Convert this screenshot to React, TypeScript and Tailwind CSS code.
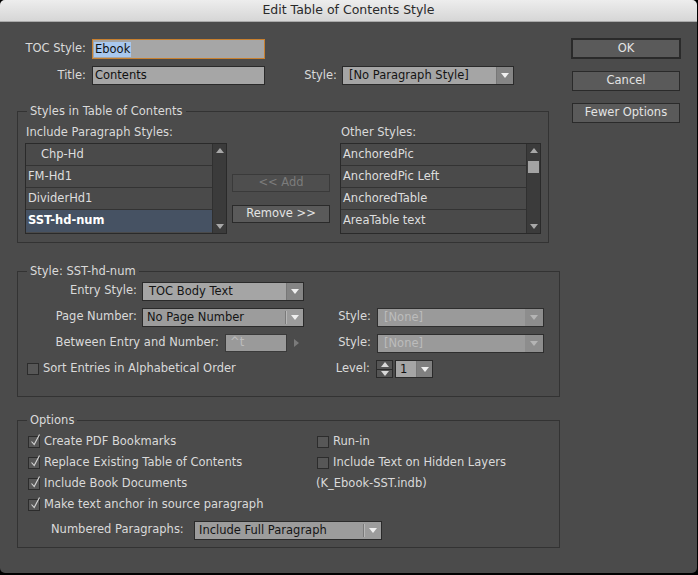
import type { ReactNode } from "react"

// ---------------------------------------------------------------------------
// Small building blocks
// ---------------------------------------------------------------------------

function Caret({ className }: { className: string }) {
  return (
    <svg width="8" height="5" viewBox="0 0 8 5" className={className}>
      <path d="M0 0h8L4 5z" fill="currentColor" />
    </svg>
  )
}

function UpCaret({ className }: { className: string }) {
  return (
    <svg width="8" height="5" viewBox="0 0 8 5" className={className}>
      <path d="M0 5h8L4 0z" fill="currentColor" />
    </svg>
  )
}

type DropVariant = "solid" | "split" | "disabled"

function Dropdown({
  value,
  width,
  variant,
}: {
  value: string
  width: string
  variant: DropVariant
}) {
  if (variant === "disabled") {
    return (
      <div className={`flex h-[19px] border border-[#2e2e2e] bg-[#9a9a9a] ${width}`}>
        <span className="flex-1 pl-[6px] leading-[17px] text-[#bcbcbc]">{value}</span>
        <span className="flex w-[18px] items-center justify-center bg-[#8d8d8d]">
          <Caret className="text-[#b4b4b4]" />
        </span>
      </div>
    )
  }
  if (variant === "split") {
    return (
      <div className={`flex h-[19px] border border-[#2a2a2a] bg-[#9c9c9c] ${width}`}>
        <span className="flex-1 pl-[4px] leading-[17px] text-[#141414]">{value}</span>
        <span className="my-[2px] w-px bg-[#7a7a7a]" />
        <span className="my-[2px] w-px bg-[#b8b8b8]" />
        <span className="flex w-[16px] items-center justify-center">
          <Caret className="text-[#efefef]" />
        </span>
      </div>
    )
  }
  return (
    <div className={`flex h-[19px] border border-[#2a2a2a] bg-[#a5a5a5] ${width}`}>
      <span className="flex-1 pl-[6px] leading-[17px] text-[#141414]">{value}</span>
      <span className="flex w-[17px] items-center justify-center border-l border-[#777] bg-[#858585]">
        <Caret className="text-[#f0f0f0]" />
      </span>
    </div>
  )
}

function Checkbox({ checked }: { checked?: boolean }) {
  return (
    <span className="relative inline-block h-[12px] w-[12px] shrink-0 border border-[#2c2c2c] bg-[#575757]">
      {checked && (
        <svg
          width="13"
          height="14"
          viewBox="0 0 13 14"
          className="absolute left-[0px] top-[-4px]"
        >
          <path d="M2.5 8.5 L5.2 11.5 L10.5 1.5" fill="none" stroke="#d6d6d6" strokeWidth="1.1" />
        </svg>
      )}
    </span>
  )
}

function Button({
  children,
  className,
  disabled,
}: {
  children: ReactNode
  className: string
  disabled?: boolean
}) {
  return (
    <div
      className={`flex items-center justify-center ${
        disabled
          ? "border border-[#3a3a3a] bg-[#4e4e4e] text-[#7c7c7c]"
          : "border border-[#2a2a2a] bg-[#5a5a5a] text-[#e4e4e4]"
      } ${className}`}
    >
      {children}
    </div>
  )
}

function ScrollBar({ thumb }: { thumb?: boolean }) {
  return (
    <div className="flex w-[14px] flex-col items-center border-l border-[#303030] bg-[#3b3b3b]">
      <UpCaret className="mt-[4px] text-[#a8a8a8]" />
      {thumb && <div className="mt-[8px] h-[12px] w-[11px] bg-[#a3a3a3]" />}
      <div className="flex-1" />
      <Caret className="mb-[4px] text-[#a8a8a8]" />
    </div>
  )
}

function StyleList({
  items,
  thumb,
}: {
  items: { label: string; indent?: boolean; selected?: boolean }[]
  thumb?: boolean
}) {
  return (
    <div className="flex h-[91px] border border-[#2a2a2a] bg-[#4a4a4a]">
      <div className="flex flex-1 flex-col">
        {items.map((it, i) => (
          <div
            key={it.label}
            className={`flex h-[22px] items-center ${
              i < items.length - 1 ? "border-b border-[#333]" : ""
            } ${it.selected ? "bg-[#465263] font-bold text-white" : "text-[#dedede]"} ${
              it.indent ? "pl-[15px]" : "pl-[2px]"
            }`}
          >
            {it.label}
          </div>
        ))}
      </div>
      <ScrollBar thumb={thumb} />
    </div>
  )
}

// ---------------------------------------------------------------------------
// Dialog
// ---------------------------------------------------------------------------

export default function App() {
  return (
    <div className="h-[575px] w-[698px] overflow-hidden bg-black font-['DejaVu_Sans',sans-serif] text-[11.5px] text-[#dadada]">
      <div className="h-[573px] w-[697px] overflow-hidden rounded-[5px] bg-[#4b4b4b]">
        {/* Title bar */}
        <div className="flex h-[22px] items-center justify-center border-b border-[#a9a9a9] bg-gradient-to-b from-[#ededed] to-[#d6d6d6] text-[12.5px] text-[#2a2a2a]">
          Edit Table of Contents Style
        </div>

        <div className="flex pl-[17px] pt-[16px]">
          {/* Left column */}
          <div className="flex w-[543px] flex-col pt-[1px]">
            {/* TOC Style */}
            <div className="flex h-[20px] items-center gap-[6px]">
              <span className="w-[69px] text-right">TOC Style:</span>
              <div className="flex h-[20px] w-[173px] items-center border border-[#c8802f] bg-[#a6a6a6] pl-[1px]">
                <span className="bg-[#a9c8ee] px-[1px] leading-[15px] text-[#111]">Ebook</span>
              </div>
            </div>
            {/* Title */}
            <div className="mt-[7px] flex h-[19px] items-center">
              <span className="w-[69px] text-right">Title:</span>
              <div className="ml-[6px] flex h-[19px] w-[173px] items-center border border-[#2a2a2a] bg-[#a6a6a6] pl-[2px] text-[#111]">
                Contents
              </div>
              <span className="w-[72px] text-right">Style:</span>
              <div className="ml-[5px]">
                <Dropdown value="[No Paragraph Style]" width="w-[172px]" variant="solid" />
              </div>
            </div>

            {/* Styles in Table of Contents */}
            <fieldset className="mt-[19px] w-[532px] border border-[#333] px-[7px] pb-[8px]">
              <legend className="ml-[2px] px-[3px] leading-[14px]">Styles in Table of Contents</legend>
              <div className="mt-[7px] flex">
                <div className="flex w-[202px] flex-col">
                  <span className="pl-[1px] leading-[14px]">Include Paragraph Styles:</span>
                  <div className="mt-[4px]">
                    <StyleList
                      items={[
                        { label: "Chp-Hd", indent: true },
                        { label: "FM-Hd1" },
                        { label: "DividerHd1" },
                        { label: "SST-hd-num", selected: true },
                      ]}
                    />
                  </div>
                </div>
                <div className="ml-[5px] flex w-[98px] flex-col pt-[49px]">
                  <Button disabled className="h-[18px]">
                    &lt;&lt; Add
                  </Button>
                  <Button className="mt-[13px] h-[18px]">Remove &gt;&gt;</Button>
                </div>
                <div className="ml-[10px] flex w-[201px] flex-col">
                  <span className="pl-[1px] leading-[14px]">Other Styles:</span>
                  <div className="mt-[4px]">
                    <StyleList
                      thumb
                      items={[
                        { label: "AnchoredPic" },
                        { label: "AnchoredPic Left" },
                        { label: "AnchoredTable" },
                        { label: "AreaTable text" },
                      ]}
                    />
                  </div>
                </div>
              </div>
            </fieldset>

            {/* Style: SST-hd-num */}
            <fieldset className="mt-[21px] w-[543px] border border-[#333] pb-[14px]">
              <legend className="ml-[9px] px-[3px] leading-[14px]">Style: SST-hd-num</legend>
              <div className="flex h-[26px] items-center">
                <span className="w-[119px] text-right">Entry Style:</span>
                <div className="ml-[5px]">
                  <Dropdown value="TOC Body Text" width="w-[162px]" variant="solid" />
                </div>
              </div>
              <div className="flex h-[26px] items-center">
                <div className="flex w-[316px] items-center">
                  <span className="w-[119px] text-right">Page Number:</span>
                  <div className="ml-[5px]">
                    <Dropdown value="No Page Number" width="w-[162px]" variant="split" />
                  </div>
                </div>
                <span className="w-[37px] text-right">Style:</span>
                <div className="ml-[6px]">
                  <Dropdown value="[None]" width="w-[167px]" variant="disabled" />
                </div>
              </div>
              <div className="flex h-[26px] items-center">
                <div className="flex w-[316px] items-center">
                  <span className="w-[201px] text-right">Between Entry and Number:</span>
                  <div className="ml-[6px] flex h-[18px] w-[62px] items-center border border-[#3a3a3a] bg-[#9a9a9a] pl-[4px] text-[#bdbdbd]">
                    ^t
                  </div>
                  <svg width="5" height="8" viewBox="0 0 5 8" className="ml-[7px] text-[#7a7a7a]">
                    <path d="M0 0L5 4L0 8z" fill="currentColor" />
                  </svg>
                </div>
                <span className="w-[37px] text-right">Style:</span>
                <div className="ml-[6px]">
                  <Dropdown value="[None]" width="w-[167px]" variant="disabled" />
                </div>
              </div>
              <div className="flex h-[26px] items-center">
                <div className="flex w-[316px] items-center gap-[4px] pl-[9px]">
                  <Checkbox />
                  <span>Sort Entries in Alphabetical Order</span>
                </div>
                <span className="w-[36px] text-right">Level:</span>
                <div className="ml-[6px] flex h-[18px] w-[17px] flex-col border border-[#2a2a2a] bg-[#555]">
                  <div className="flex flex-1 items-center justify-center border-b border-[#2a2a2a]">
                    <UpCaret className="text-[#d8d8d8]" />
                  </div>
                  <div className="flex flex-1 items-center justify-center">
                    <Caret className="text-[#d8d8d8]" />
                  </div>
                </div>
                <div className="ml-[2px] flex h-[18px] w-[38px] border border-[#2a2a2a] bg-[#a5a5a5]">
                  <span className="flex-1 pl-[4px] leading-[16px] text-[#111]">1</span>
                  <span className="flex w-[16px] items-center justify-center border-l border-[#777] bg-[#808080]">
                    <Caret className="text-[#f0f0f0]" />
                  </span>
                </div>
              </div>
            </fieldset>

            {/* Options */}
            <fieldset className="mt-[16px] w-[543px] border border-[#333] pb-[7px] pt-[4px]">
              <legend className="ml-[9px] px-[3px] leading-[14px]">Options</legend>
              <div className="flex">
                <div className="flex w-[299px] flex-col pl-[10px]">
                  {[
                    "Create PDF Bookmarks",
                    "Replace Existing Table of Contents",
                    "Include Book Documents",
                    "Make text anchor in source paragraph",
                  ].map((t) => (
                    <div key={t} className="flex h-[21px] items-center gap-[4px] whitespace-nowrap">
                      <Checkbox checked />
                      <span>{t}</span>
                    </div>
                  ))}
                </div>
                <div className="flex flex-col">
                  <div className="flex h-[21px] items-center gap-[4px]">
                    <Checkbox />
                    <span>Run-in</span>
                  </div>
                  <div className="flex h-[21px] items-center gap-[4px]">
                    <Checkbox />
                    <span>Include Text on Hidden Layers</span>
                  </div>
                  <div className="-ml-[1px] flex h-[21px] items-center">(K_Ebook-SST.indb)</div>
                </div>
              </div>
              <div className="mt-[5px] flex h-[20px] items-center pl-[33px]">
                <span className="w-[133px]">Numbered Paragraphs:</span>
                <div className="ml-[10px]">
                  <Dropdown value="Include Full Paragraph" width="w-[188px]" variant="split" />
                </div>
              </div>
            </fieldset>
          </div>

          {/* Right column buttons */}
          <div className="ml-[11px] flex w-[110px] flex-col">
            <div className="flex h-[21px] items-center justify-center border-2 border-[#2a2a2a] bg-[#5a5a5a] text-[#e4e4e4]">
              OK
            </div>
            <Button className="mx-[1px] mt-[12px] h-[20px]">Cancel</Button>
            <Button className="mx-[1px] mt-[12px] h-[20px]">Fewer Options</Button>
          </div>
        </div>
      </div>
    </div>
  )
}
